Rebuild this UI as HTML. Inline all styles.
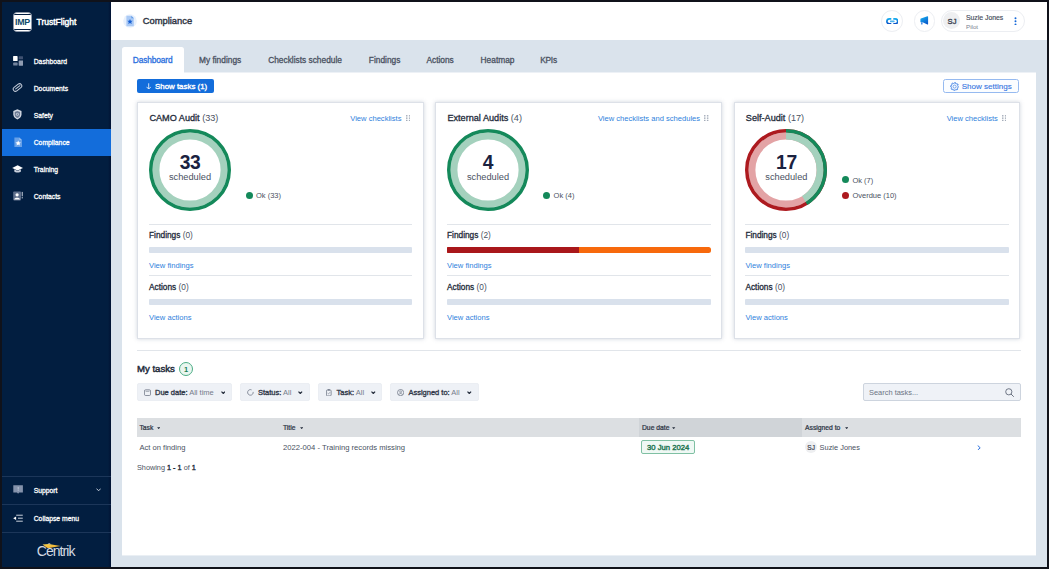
<!DOCTYPE html>
<html>
<head>
<meta charset="utf-8">
<title>Compliance</title>
<style>
*{box-sizing:border-box;margin:0;padding:0}
html,body{width:1049px;height:569px;overflow:hidden;background:#dae3ec}
body{font-family:"Liberation Sans",sans-serif;color:#2a3242;position:relative}
.a{position:absolute;white-space:nowrap;line-height:1}
</style>
</head>
<body>

<div class="a" style="left:0.00px;top:0.00px;width:111.00px;height:569.00px;background:#021e40"></div>
<div class="a" style="left:111.00px;top:0.00px;width:938.00px;height:40.00px;background:#fff"></div>
<div class="a" style="left:122.00px;top:73.00px;width:914.00px;height:482.00px;background:#fff"></div>
<div class="a" style="left:122.00px;top:72.00px;width:914.00px;height:1.00px;background:#edf1f6"></div>
<div class="a" style="left:122.00px;top:555.00px;width:914.00px;height:1.00px;background:#eaeff4"></div>
<div class="a" style="left:108.00px;top:0.00px;width:3.00px;height:569.00px;background:linear-gradient(to right,rgba(0,8,40,0),rgba(0,8,40,.55))"></div>
<div class="a" style="left:13px;top:12px;width:19px;height:20px;border-radius:4px;background:#fff;border:1px solid #8c97a8;overflow:hidden"><div class="a" style="left:0;top:0.8px;width:17px;height:1.3px;background:#021e40"></div><div class="a" style="left:0;bottom:0.8px;width:17px;height:1.3px;background:#021e40"></div><div class="a" style="left:1.0px;top:4.8px;font-size:8.8px;font-weight:bold;color:#0d4a6b;letter-spacing:-.3px">IMP</div></div>
<div class="a" style="font-size:8.5px;top:18.00px;color:#fff;left:36.50px;-webkit-text-stroke:0.45px #fff;">TrustFlight</div>
<div class="a" style="left:2.00px;top:129.00px;width:109.00px;height:27.00px;background:#136ddb"></div>
<div class="a" style="font-size:6.8px;top:59.00px;color:#fff;left:33.70px;-webkit-text-stroke:0.27px #fff;">Dashboard</div>
<div class="a" style="font-size:6.8px;top:86.00px;color:#fff;left:33.70px;-webkit-text-stroke:0.27px #fff;">Documents</div>
<div class="a" style="font-size:6.8px;top:113.00px;color:#fff;left:33.70px;-webkit-text-stroke:0.27px #fff;">Safety</div>
<div class="a" style="font-size:6.8px;top:140.00px;color:#fff;left:33.70px;-webkit-text-stroke:0.27px #fff;">Compliance</div>
<div class="a" style="font-size:6.8px;top:167.00px;color:#fff;left:33.70px;-webkit-text-stroke:0.27px #fff;">Training</div>
<div class="a" style="font-size:6.8px;top:194.00px;color:#fff;left:33.70px;-webkit-text-stroke:0.27px #fff;">Contacts</div>
<div class="a" style="font-size:6.8px;top:488.00px;color:#fff;left:33.70px;-webkit-text-stroke:0.27px #fff;">Support</div>
<div class="a" style="font-size:6.8px;top:516.00px;color:#fff;left:33.70px;-webkit-text-stroke:0.27px #fff;">Collapse menu</div>
<div class="a" style="left:2.00px;top:476.00px;width:109.00px;height:1.00px;background:#1c3659"></div>
<div class="a" style="left:2.00px;top:504.00px;width:109.00px;height:1.00px;background:#1c3659"></div>
<div class="a" style="left:2.00px;top:532.00px;width:109.00px;height:1.00px;background:#1c3659"></div>
<svg class="a" style="left:12.60px;top:55.60px" width="10.4" height="10.2" viewBox="0 0 10.4 10.2"><rect x="0.1" y="0.1" width="4.5" height="5" rx=".6" fill="#fff"/><rect x="5.7" y="0.3" width="4.4" height="3.0" rx=".6" fill="#3f5171"/><rect x="0.2" y="6.6" width="4.4" height="3.0" rx=".6" fill="#73839d"/><rect x="5.7" y="4.4" width="4.5" height="5.3" rx=".6" fill="#8f9cb2"/></svg>
<svg class="a" style="left:12.20px;top:82.20px" width="11" height="11" viewBox="0 0 11 11"><g transform="rotate(-38 5.5 5.5)" fill="none" stroke="#c3cbd8" stroke-linecap="round"><rect x="0.7" y="3.3" width="9.6" height="4.4" rx="2.2" stroke-width="1.05"/><path d="M3.2 5.5 H8.6" stroke-width="1.0"/></g></svg>
<svg class="a" style="left:13.30px;top:109.40px" width="8.8" height="10.8" viewBox="0 0 8.8 10.8"><path d="M4.4 0.3 L8.5 1.9 V5.3 C8.5 7.8 6.7 9.6 4.4 10.5 C2.1 9.6 0.3 7.8 0.3 5.3 V1.9 Z" fill="#d3d9e3"/><path d="M4.4 1.9 L7.1 3 V5.4 C7.1 7 5.9 8.3 4.4 9 C2.9 8.3 1.7 7 1.7 5.4 V3 Z" fill="#6c7b95"/><circle cx="4.4" cy="5.3" r="1.5" fill="#c3cbd8"/><circle cx="4.4" cy="5.3" r=".7" fill="#6c7b95"/></svg>
<svg class="a" style="left:13.60px;top:137.20px" width="8.4" height="10.4" viewBox="0 0 8.4 10.4"><path d="M0.4 0.4 H5.4 L8.0 3.0 V10 H0.4 Z" fill="rgba(255,255,255,.36)"/><path d="M5.4 0.4 V3.0 H8.0 Z" fill="rgba(255,255,255,.3)"/><path d="M4.2 3.5 L5.0 5.3 L6.9 5.45 L5.45 6.7 L5.9 8.6 L4.2 7.6 L2.5 8.6 L2.95 6.7 L1.5 5.45 L3.4 5.3 Z" fill="#fff"/></svg>
<svg class="a" style="left:12.40px;top:165.00px" width="11.2" height="8.4" viewBox="0 0 11.2 8.4"><path d="M5.6 0.2 L11 2.9 L5.6 5.6 L0.2 2.9 Z" fill="#fff"/><path d="M2.3 4.2 V6.4 C3.2 7.8 8.0 7.8 8.9 6.4 V4.2 L5.6 5.9 Z" fill="#c9d0dc"/></svg>
<svg class="a" style="left:13.00px;top:191.40px" width="10.6" height="10" viewBox="0 0 10.6 10"><rect x="0.2" y="0.4" width="7.8" height="9" rx=".8" fill="#60708c"/><circle cx="4.1" cy="3.8" r="1.6" fill="#fff"/><path d="M1.2 8.6 C1.2 6.2 7.0 6.2 7.0 8.6 Z" fill="#fff"/><rect x="8.7" y="0.9" width="1.1" height="4.4" fill="#b9c2d0"/><rect x="8.7" y="6.1" width="1.1" height="1.3" fill="#b9c2d0"/></svg>
<svg class="a" style="left:12.70px;top:484.80px" width="10.2" height="9" viewBox="0 0 10.2 9"><path d="M0.3 0.2 H9.9 V7.6 H6.2 L5.1 8.8 L4.0 7.6 H0.3 Z" fill="#8492ab"/><rect x="4.75" y="2.0" width=".8" height="2.6" fill="#c9d1de"/><rect x="4.75" y="5.2" width=".8" height=".8" fill="#c9d1de"/></svg>
<svg class="a" style="left:95.60px;top:487.80px" width="5.2" height="3.8" viewBox="0 0 5.2 3.8"><path d="M0.5 0.6 L2.6 2.8 L4.7 0.6" fill="none" stroke="#c3ccd9" stroke-width="1.0"/></svg>
<svg class="a" style="left:12.70px;top:513.60px" width="10.2" height="8" viewBox="0 0 10.2 8"><path d="M3.2 1.2 H9.8 M5.0 4.2 H9.8 M3.2 7.2 H9.8" stroke="#d5dae3" stroke-width=".95"/><path d="M3.1 2.4 L0.2 4.2 L3.1 6.0 Z" fill="#fff"/></svg>
<div class="a" style="font-size:14.0px;top:544.00px;color:#d3d9e2;left:36.70px;letter-spacing:-0.92px;">Centrik</div>
<svg class="a" style="left:42.20px;top:543.20px" width="19" height="6" viewBox="0 0 19 6"><defs><linearGradient id="lg3" x1="0" y1="0" x2="1" y2="1"><stop offset="0" stop-color="#f7d34f"/><stop offset="1" stop-color="#eea82a"/></linearGradient></defs><path d="M0.5 1.4 L6.6 0.9 L18.6 2.9 L5.8 5.3 Z" fill="url(#lg3)"/><path d="M5.6 0.9 L7.2 0.2 L9.4 1.3 Z" fill="#dfe3ea"/></svg>
<svg class="a" style="left:123.00px;top:14.00px" width="14" height="14" viewBox="0 0 14 14"><circle cx="7" cy="7" r="6.8" fill="#e9f1fc"/><path d="M3.4 1.8 H8.4 L10.8 4.2 V12.2 H3.4 Z" fill="#a9c9f5"/><path d="M8.4 1.8 V4.2 H10.8 Z" fill="#5f9be8"/><path d="M7 4.9 L7.8 6.7 L9.7 6.85 L8.25 8.1 L8.7 10 L7 9 L5.3 10 L5.75 8.1 L4.3 6.85 L6.2 6.7 Z" fill="#1760d3"/></svg>
<div class="a" style="font-size:9.4px;top:16.00px;color:#2f3645;left:142.70px;-webkit-text-stroke:0.4px #2f3645;">Compliance</div>
<div class="a" style="left:881.10px;top:9.90px;width:21.80px;height:21.80px;border-radius:50%;border:1px solid #eceef2;background:#fff"></div>
<svg class="a" style="left:885.60px;top:17.50px" width="12.6" height="6.8" viewBox="0 0 12.6 6.8"><defs><linearGradient id="lg1" x1="0" y1="0" x2="0" y2="1"><stop offset="0" stop-color="#14aaee"/><stop offset="1" stop-color="#0a4fc6"/></linearGradient></defs><path d="M5.3 0.9 H3.4 a2.5 2.5 0 0 0 0 5 H5.3 M7.3 0.9 H9.2 a2.5 2.5 0 0 1 0 5 H7.3" fill="none" stroke="url(#lg1)" stroke-width="1.7"/><rect x="4.0" y="2.6" width="4.6" height="1.6" rx=".4" fill="#4fb3ee"/></svg>
<div class="a" style="left:913.60px;top:9.90px;width:21.80px;height:21.80px;border-radius:50%;border:1px solid #eceef2;background:#fff"></div>
<svg class="a" style="left:920.40px;top:16.40px" width="8.6" height="9" viewBox="0 0 8.6 9"><defs><linearGradient id="lg2" x1="0.2" y1="0" x2="0.8" y2="1"><stop offset="0" stop-color="#16b0f0"/><stop offset="1" stop-color="#0a55c8"/></linearGradient></defs><path d="M0.4 3.2 Q0.4 2.7 0.9 2.6 L7.4 0.2 Q8.1 0.1 8.1 0.8 V8.0 Q8.1 8.7 7.4 8.5 L2.6 6.2 H0.9 Q0.4 6.2 0.4 5.7 Z" fill="url(#lg2)"/><path d="M1.0 6.2 H2.7 L2.5 8.4 H1.0 Z" fill="#4d8fe4"/></svg>
<div class="a" style="left:940.90px;top:9.90px;width:84.30px;height:21.80px;border-radius:11px;border:1px solid #eceef2;background:#fff"></div>
<div class="a" style="left:942.90px;top:12.20px;width:17.20px;height:17.20px;border-radius:50%;background:#eeeff1"></div>
<div class="a" style="font-size:7.6px;top:18.00px;color:#3a4150;left:947.60px;-webkit-text-stroke:0.35px #3a4150;letter-spacing:0.1px;">SJ</div>
<div class="a" style="font-size:6.85px;top:15.00px;color:#454c5a;left:966.00px;-webkit-text-stroke:0.15px #454c5a;">Suzie Jones</div>
<div class="a" style="font-size:6.2px;top:24.00px;color:#7a8290;left:966.00px;">Pilot</div>
<svg class="a" style="left:1014.40px;top:16.80px" width="3" height="8.6" viewBox="0 0 3 8.6"><circle cx="1.5" cy="1.2" r="1" fill="#1467d8"/><circle cx="1.5" cy="4.3" r="1" fill="#1467d8"/><circle cx="1.5" cy="7.4" r="1" fill="#1467d8"/></svg>
<div class="a" style="left:122.00px;top:47.00px;width:62.00px;height:26.00px;background:#fff;border-radius:2.5px 2.5px 0 0"></div>
<div class="a" style="font-size:8.35px;top:56.00px;color:#2a6fde;left:132.80px;-webkit-text-stroke:0.3px #2a6fde;letter-spacing:-0.12px;">Dashboard</div>
<div class="a" style="font-size:8.35px;top:56.00px;color:#4a5262;left:199.00px;-webkit-text-stroke:0.3px #4a5262;">My findings</div>
<div class="a" style="font-size:8.35px;top:56.00px;color:#4a5262;left:268.20px;-webkit-text-stroke:0.3px #4a5262;">Checklists schedule</div>
<div class="a" style="font-size:8.35px;top:56.00px;color:#4a5262;left:368.80px;-webkit-text-stroke:0.3px #4a5262;">Findings</div>
<div class="a" style="font-size:8.35px;top:56.00px;color:#4a5262;left:426.40px;-webkit-text-stroke:0.3px #4a5262;">Actions</div>
<div class="a" style="font-size:8.35px;top:56.00px;color:#4a5262;left:480.60px;-webkit-text-stroke:0.3px #4a5262;">Heatmap</div>
<div class="a" style="font-size:8.35px;top:56.00px;color:#4a5262;left:540.20px;-webkit-text-stroke:0.3px #4a5262;letter-spacing:-0.25px;">KPIs</div>
<div class="a" style="left:137.00px;top:79.00px;width:77.00px;height:14.00px;background:#136ddb;border-radius:2px"></div>
<svg class="a" style="left:145.60px;top:82.60px" width="5.4" height="6.8" viewBox="0 0 5.4 6.8"><path d="M2.7 0.3 V6.0 M0.5 3.8 L2.7 6.1 L4.9 3.8" fill="none" stroke="#fff" stroke-width=".8"/></svg>
<div class="a" style="font-size:7.9px;top:83.00px;color:#fff;left:155.00px;-webkit-text-stroke:0.35px #fff;">Show tasks (1)</div>
<div class="a" style="left:943.40px;top:79.30px;width:75.60px;height:14.20px;border:1px solid #96baf0;border-radius:2.5px;background:#fbfdff"></div>
<svg class="a" style="left:950.20px;top:81.50px" width="9.2" height="9.2" viewBox="0 0 9.2 9.2"><circle cx="4.6" cy="4.6" r="3.5" fill="none" stroke="#4d8ae6" stroke-width=".8"/><circle cx="4.6" cy="4.6" r="4.15" fill="none" stroke="#4d8ae6" stroke-width=".9" stroke-dasharray="1.63 1.63" stroke-dashoffset=".8"/><circle cx="4.6" cy="4.6" r="1.55" fill="none" stroke="#4d8ae6" stroke-width=".75"/></svg>
<div class="a" style="font-size:8.05px;top:83.00px;color:#3373e1;left:961.70px;-webkit-text-stroke:0.1px #3373e1;">Show settings</div>
<div class="a" style="left:137.40px;top:102.30px;width:286.40px;height:236.30px;background:#fff;border:1px solid #dde1e8;box-shadow:0 0 4px rgba(130,142,165,.38)"></div>
<div class="a" style="left:149.40px;top:114px;font-size:9.15px;color:#4a5262"><span style="color:#232b3a;-webkit-text-stroke:.3px #232b3a">CAMO Audit</span> (33)</div>
<div class="a" style="font-size:7.58px;top:115.00px;color:#2f7fdc;right:647.50px;">View checklists</div>
<svg class="a" style="left:405.60px;top:115.10px" width="4.4" height="6.3" viewBox="0 0 4.4 6.3"><g fill="#a4acb9"><rect x="0" y="0.1" width="1.5" height="1.4"/><rect x="2.9" y="0.1" width="1.5" height="1.4"/><rect x="0" y="2.45" width="1.5" height="1.4"/><rect x="2.9" y="2.45" width="1.5" height="1.4"/><rect x="0" y="4.8" width="1.5" height="1.4"/><rect x="2.9" y="4.8" width="1.5" height="1.4"/></g></svg>
<svg class="a" style="left:149.00px;top:128.80px" width="82" height="82" viewBox="0 0 82 82"><circle cx="41" cy="41" r="34.1" fill="none" stroke="#a4d1bd" stroke-width="7.0"/><circle cx="41" cy="41" r="39.25" fill="none" stroke="#14895a" stroke-width="3.5"/></svg>
<div class="a" style="left:149.00px;width:82px;text-align:center;top:153px;font-size:19.3px;letter-spacing:-.45px;font-weight:bold;color:#1a2240">33</div>
<div class="a" style="left:149.00px;width:82px;text-align:center;top:173px;font-size:9.25px;color:#4a5262">scheduled</div>
<div class="a" style="left:245.60px;top:191.50px;width:7.00px;height:7.00px;border-radius:50%;background:#14895a"></div>
<div class="a" style="font-size:7.5px;top:192.00px;color:#4a5262;left:256.00px;">Ok (33)</div>
<div class="a" style="left:149.00px;top:223.60px;width:263.30px;height:1.00px;background:#e1e5ea"></div>
<div class="a" style="left:149.00px;top:231px;font-size:8.3px;color:#4a5262"><span style="color:#232b3a;-webkit-text-stroke:.3px #232b3a">Findings</span> (0)</div>
<div class="a" style="left:149.00px;top:247.00px;width:263.30px;height:6.20px;background:#d9e1ec;border-radius:1px"></div>
<div class="a" style="font-size:7.6px;top:262.00px;color:#2f7fdc;left:149.00px;">View findings</div>
<div class="a" style="left:149.00px;top:275.00px;width:263.30px;height:1.00px;background:#e1e5ea"></div>
<div class="a" style="left:149.00px;top:283px;font-size:8.3px;color:#4a5262"><span style="color:#232b3a;-webkit-text-stroke:.3px #232b3a">Actions</span> (0)</div>
<div class="a" style="left:149.00px;top:298.70px;width:263.30px;height:6.20px;background:#d9e1ec;border-radius:1px"></div>
<div class="a" style="font-size:7.6px;top:314.00px;color:#2f7fdc;left:149.00px;">View actions</div>
<div class="a" style="left:435.00px;top:102.30px;width:287.40px;height:236.30px;background:#fff;border:1px solid #dde1e8;box-shadow:0 0 4px rgba(130,142,165,.38)"></div>
<div class="a" style="left:447.40px;top:114px;font-size:9.15px;color:#4a5262"><span style="color:#232b3a;-webkit-text-stroke:.3px #232b3a">External Audits</span> (4)</div>
<div class="a" style="font-size:7.58px;top:115.00px;color:#2f7fdc;right:348.90px;">View checklists and schedules</div>
<svg class="a" style="left:704.20px;top:115.10px" width="4.4" height="6.3" viewBox="0 0 4.4 6.3"><g fill="#a4acb9"><rect x="0" y="0.1" width="1.5" height="1.4"/><rect x="2.9" y="0.1" width="1.5" height="1.4"/><rect x="0" y="2.45" width="1.5" height="1.4"/><rect x="2.9" y="2.45" width="1.5" height="1.4"/><rect x="0" y="4.8" width="1.5" height="1.4"/><rect x="2.9" y="4.8" width="1.5" height="1.4"/></g></svg>
<svg class="a" style="left:447.00px;top:128.80px" width="82" height="82" viewBox="0 0 82 82"><circle cx="41" cy="41" r="34.1" fill="none" stroke="#a4d1bd" stroke-width="7.0"/><circle cx="41" cy="41" r="39.25" fill="none" stroke="#14895a" stroke-width="3.5"/></svg>
<div class="a" style="left:447.00px;width:82px;text-align:center;top:153px;font-size:19.3px;letter-spacing:-.45px;font-weight:bold;color:#1a2240">4</div>
<div class="a" style="left:447.00px;width:82px;text-align:center;top:173px;font-size:9.25px;color:#4a5262">scheduled</div>
<div class="a" style="left:543.20px;top:191.50px;width:7.00px;height:7.00px;border-radius:50%;background:#14895a"></div>
<div class="a" style="font-size:7.5px;top:192.00px;color:#4a5262;left:553.60px;">Ok (4)</div>
<div class="a" style="left:447.00px;top:223.60px;width:263.90px;height:1.00px;background:#e1e5ea"></div>
<div class="a" style="left:447.00px;top:231px;font-size:8.3px;color:#4a5262"><span style="color:#232b3a;-webkit-text-stroke:.3px #232b3a">Findings</span> (2)</div>
<div class="a" style="left:447.00px;top:247px;width:264.30px;height:6.2px;border-radius:1px 2.5px 2.5px 1px;background:#f7690c;overflow:hidden"><div style="width:50%;height:7px;background:#a9171b"></div></div>
<div class="a" style="font-size:7.6px;top:262.00px;color:#2f7fdc;left:447.00px;">View findings</div>
<div class="a" style="left:447.00px;top:275.00px;width:263.90px;height:1.00px;background:#e1e5ea"></div>
<div class="a" style="left:447.00px;top:283px;font-size:8.3px;color:#4a5262"><span style="color:#232b3a;-webkit-text-stroke:.3px #232b3a">Actions</span> (0)</div>
<div class="a" style="left:447.00px;top:298.70px;width:263.90px;height:6.20px;background:#d9e1ec;border-radius:1px"></div>
<div class="a" style="font-size:7.6px;top:314.00px;color:#2f7fdc;left:447.00px;">View actions</div>
<div class="a" style="left:733.80px;top:102.30px;width:286.40px;height:236.30px;background:#fff;border:1px solid #dde1e8;box-shadow:0 0 4px rgba(130,142,165,.38)"></div>
<div class="a" style="left:745.80px;top:114px;font-size:9.15px;color:#4a5262"><span style="color:#232b3a;-webkit-text-stroke:.3px #232b3a">Self-Audit</span> (17)</div>
<div class="a" style="font-size:7.58px;top:115.00px;color:#2f7fdc;right:51.10px;">View checklists</div>
<svg class="a" style="left:1002.00px;top:115.10px" width="4.4" height="6.3" viewBox="0 0 4.4 6.3"><g fill="#a4acb9"><rect x="0" y="0.1" width="1.5" height="1.4"/><rect x="2.9" y="0.1" width="1.5" height="1.4"/><rect x="0" y="2.45" width="1.5" height="1.4"/><rect x="2.9" y="2.45" width="1.5" height="1.4"/><rect x="0" y="4.8" width="1.5" height="1.4"/><rect x="2.9" y="4.8" width="1.5" height="1.4"/></g></svg>
<svg class="a" style="left:745.40px;top:128.80px" width="82" height="82" viewBox="0 0 82 82"><g transform="rotate(-90 41 41)"><circle cx="41" cy="41" r="34.1" fill="none" stroke="#e3a3a5" stroke-width="7.0"/><circle cx="41" cy="41" r="39.25" fill="none" stroke="#ad1a1f" stroke-width="3.5"/><circle cx="41" cy="41" r="34.1" fill="none" stroke="#a4d1bd" stroke-width="7.0" stroke-dasharray="88.22 214.26"/><circle cx="41" cy="41" r="39.25" fill="none" stroke="#14895a" stroke-width="3.5" stroke-dasharray="101.55 246.62"/></g></svg>
<div class="a" style="left:745.40px;width:82px;text-align:center;top:153px;font-size:19.3px;letter-spacing:-.45px;font-weight:bold;color:#1a2240">17</div>
<div class="a" style="left:745.40px;width:82px;text-align:center;top:173px;font-size:9.25px;color:#4a5262">scheduled</div>
<div class="a" style="left:842.00px;top:176.30px;width:7.00px;height:7.00px;border-radius:50%;background:#14895a"></div>
<div class="a" style="font-size:7.5px;top:177.00px;color:#4a5262;left:852.40px;">Ok (7)</div>
<div class="a" style="left:842.00px;top:191.50px;width:7.00px;height:7.00px;border-radius:50%;background:#ad1a1f"></div>
<div class="a" style="font-size:7.5px;top:192.00px;color:#4a5262;left:852.40px;">Overdue (10)</div>
<div class="a" style="left:745.40px;top:223.60px;width:263.30px;height:1.00px;background:#e1e5ea"></div>
<div class="a" style="left:745.40px;top:231px;font-size:8.3px;color:#4a5262"><span style="color:#232b3a;-webkit-text-stroke:.3px #232b3a">Findings</span> (0)</div>
<div class="a" style="left:745.40px;top:247.00px;width:263.30px;height:6.20px;background:#d9e1ec;border-radius:1px"></div>
<div class="a" style="font-size:7.6px;top:262.00px;color:#2f7fdc;left:745.40px;">View findings</div>
<div class="a" style="left:745.40px;top:275.00px;width:263.30px;height:1.00px;background:#e1e5ea"></div>
<div class="a" style="left:745.40px;top:283px;font-size:8.3px;color:#4a5262"><span style="color:#232b3a;-webkit-text-stroke:.3px #232b3a">Actions</span> (0)</div>
<div class="a" style="left:745.40px;top:298.70px;width:263.30px;height:6.20px;background:#d9e1ec;border-radius:1px"></div>
<div class="a" style="font-size:7.6px;top:314.00px;color:#2f7fdc;left:745.40px;">View actions</div>
<div class="a" style="left:137.00px;top:349.80px;width:884.00px;height:1.00px;background:#e1e5ea"></div>
<div class="a" style="font-size:9.6px;top:364.00px;color:#232b3a;left:137.00px;-webkit-text-stroke:0.45px #232b3a;">My tasks</div>
<div class="a" style="left:179.00px;top:362.00px;width:14.00px;height:14.00px;border-radius:50%;border:1.2px solid #4bad85;background:#eaf6f0"></div>
<div class="a" style="font-size:7.5px;top:366.00px;color:#1c7d55;left:183.90px;font-weight:bold;">1</div>
<div class="a" style="left:137.00px;top:383.00px;width:95.00px;height:17.60px;background:#eef1f6;border:1px solid #ebeef3;border-radius:2px"></div>
<svg class="a" style="left:144.00px;top:389.00px" width="7" height="7" viewBox="0 0 7 7"><rect x=".45" y=".8" width="6.1" height="5.7" rx="1.2" fill="none" stroke="#6a7282" stroke-width=".75"/><path d="M1.6 2.3 H5.4" stroke="#6a7282" stroke-width=".6"/></svg>
<div class="a" style="left:155.00px;top:389px;font-size:7.5px;color:#747c8b"><span style="color:#303848;-webkit-text-stroke:.33px #303848">Due date:</span> All time</div>
<svg class="a" style="left:220.60px;top:390.90px" width="4.6" height="3.4" viewBox="0 0 4.6 3.4"><path d="M0.5 0.6 L2.3 2.5 L4.1 0.6" fill="none" stroke="#232b3a" stroke-width="1.2"/></svg>
<div class="a" style="left:240.00px;top:383.00px;width:70.00px;height:17.60px;background:#eef1f6;border:1px solid #ebeef3;border-radius:2px"></div>
<svg class="a" style="left:247.00px;top:389.20px" width="6.8" height="6.8" viewBox="0 0 6.8 6.8"><path d="M6.16 2.91 A2.8 2.8 0 1 1 4.58 0.86" fill="none" stroke="#6a7282" stroke-width=".75"/></svg>
<div class="a" style="left:258.00px;top:389px;font-size:7.5px;color:#747c8b"><span style="color:#303848;-webkit-text-stroke:.33px #303848">Status:</span> All</div>
<svg class="a" style="left:298.20px;top:390.90px" width="4.6" height="3.4" viewBox="0 0 4.6 3.4"><path d="M0.5 0.6 L2.3 2.5 L4.1 0.6" fill="none" stroke="#232b3a" stroke-width="1.2"/></svg>
<div class="a" style="left:318.00px;top:383.00px;width:64.40px;height:17.60px;background:#eef1f6;border:1px solid #ebeef3;border-radius:2px"></div>
<svg class="a" style="left:326.00px;top:388.80px" width="5.6" height="7.4" viewBox="0 0 5.6 7.4"><rect x=".45" y="1" width="4.7" height="5.9" rx=".9" fill="none" stroke="#6a7282" stroke-width=".75"/><rect x="1.7" y=".2" width="2.2" height="1.3" rx=".3" fill="#6a7282"/><path d="M1.6 4.2 L2.5 5.0 L4.0 3.2" fill="none" stroke="#6a7282" stroke-width=".6"/></svg>
<div class="a" style="left:336.60px;top:389px;font-size:7.5px;color:#747c8b"><span style="color:#303848;-webkit-text-stroke:.33px #303848">Task:</span> All</div>
<svg class="a" style="left:371.00px;top:390.90px" width="4.6" height="3.4" viewBox="0 0 4.6 3.4"><path d="M0.5 0.6 L2.3 2.5 L4.1 0.6" fill="none" stroke="#232b3a" stroke-width="1.2"/></svg>
<div class="a" style="left:390.20px;top:383.00px;width:88.40px;height:17.60px;background:#eef1f6;border:1px solid #ebeef3;border-radius:2px"></div>
<svg class="a" style="left:397.20px;top:388.90px" width="7.2" height="7.2" viewBox="0 0 7.2 7.2"><circle cx="3.6" cy="3.6" r="3.1" fill="none" stroke="#6a7282" stroke-width=".75"/><circle cx="3.6" cy="2.9" r=".95" fill="none" stroke="#6a7282" stroke-width=".6"/><path d="M1.7 5.6 C2.2 4.2 5.0 4.2 5.5 5.6" fill="none" stroke="#6a7282" stroke-width=".6"/></svg>
<div class="a" style="left:408.40px;top:389px;font-size:7.5px;color:#747c8b"><span style="color:#303848;-webkit-text-stroke:.33px #303848">Assigned to:</span> All</div>
<svg class="a" style="left:467.00px;top:390.90px" width="4.6" height="3.4" viewBox="0 0 4.6 3.4"><path d="M0.5 0.6 L2.3 2.5 L4.1 0.6" fill="none" stroke="#232b3a" stroke-width="1.2"/></svg>
<div class="a" style="left:863.00px;top:383.00px;width:157.60px;height:17.60px;background:#eff2f7;border:1px solid #cdd4de;border-radius:2px"></div>
<div class="a" style="font-size:7.44px;top:389.00px;color:#6d7584;left:869.00px;">Search tasks...</div>
<svg class="a" style="left:1005.00px;top:387.60px" width="9.2" height="9.2" viewBox="0 0 9.2 9.2"><circle cx="3.8" cy="3.8" r="3.1" fill="none" stroke="#5a6272" stroke-width=".85"/><path d="M6.0 6.0 L8.8 8.8" stroke="#5a6272" stroke-width=".9"/></svg>
<div class="a" style="left:137.00px;top:418.00px;width:883.60px;height:19.20px;background:#dcdfe2"></div>
<div class="a" style="left:639.00px;top:418.00px;width:163.40px;height:19.20px;background:#d0d4d8"></div>
<div class="a" style="font-size:6.75px;top:425.00px;color:#2b3343;left:139.40px;-webkit-text-stroke:0.22px #2b3343;">Task</div>
<svg class="a" style="left:157.00px;top:427.00px" width="3.4" height="2.4" viewBox="0 0 3.4 2.4"><path d="M0.1 0.2 H3.3 L1.7 2.2 Z" fill="#232b3a"/></svg>
<div class="a" style="font-size:6.75px;top:425.00px;color:#2b3343;left:283.00px;-webkit-text-stroke:0.22px #2b3343;">Title</div>
<svg class="a" style="left:300.00px;top:427.00px" width="3.4" height="2.4" viewBox="0 0 3.4 2.4"><path d="M0.1 0.2 H3.3 L1.7 2.2 Z" fill="#232b3a"/></svg>
<div class="a" style="font-size:6.75px;top:425.00px;color:#2b3343;left:642.00px;-webkit-text-stroke:0.22px #2b3343;">Due date</div>
<svg class="a" style="left:672.40px;top:427.00px" width="3.4" height="2.4" viewBox="0 0 3.4 2.4"><path d="M0.1 0.2 H3.3 L1.7 2.2 Z" fill="#232b3a"/></svg>
<div class="a" style="font-size:6.75px;top:425.00px;color:#2b3343;left:805.00px;-webkit-text-stroke:0.22px #2b3343;">Assigned to</div>
<svg class="a" style="left:844.60px;top:427.00px" width="3.4" height="2.4" viewBox="0 0 3.4 2.4"><path d="M0.1 0.2 H3.3 L1.7 2.2 Z" fill="#232b3a"/></svg>
<div class="a" style="font-size:7.6px;top:444.00px;color:#4a5262;left:139.40px;">Act on finding</div>
<div class="a" style="font-size:7.67px;top:444.00px;color:#4a5262;left:283.00px;">2022-004 - Training records missing</div>
<div class="a" style="left:641.40px;top:440.00px;width:53.20px;height:14.40px;border:1px solid #7fc0a3;border-radius:2px;background:#eff8f4"></div>
<div class="a" style="font-size:7.7px;top:444.00px;color:#247652;left:647.00px;-webkit-text-stroke:0.4px #247652;">30 Jun 2024</div>
<div class="a" style="left:805.00px;top:441.00px;width:12.00px;height:12.00px;border-radius:50%;background:#eeeff1"></div>
<div class="a" style="font-size:6.5px;top:445.00px;color:#3a4150;left:807.30px;-webkit-text-stroke:0.2px #3a4150;">SJ</div>
<div class="a" style="font-size:7.42px;top:444.00px;color:#4a5262;left:819.60px;">Suzie Jones</div>
<svg class="a" style="left:976.60px;top:444.80px" width="4.2" height="5.6" viewBox="0 0 4.2 5.6"><path d="M0.7 0.5 L3.2 2.8 L0.7 5.1" fill="none" stroke="#2a6fde" stroke-width="1"/></svg>
<div class="a" style="left:137px;top:464px;font-size:7.3px;color:#4a5262">Showing <span style="color:#232b3a;-webkit-text-stroke:.35px #232b3a">1 - 1</span> of <span style="color:#232b3a;-webkit-text-stroke:.35px #232b3a">1</span></div>
<div class="a" style="left:0.00px;top:0.00px;width:1049.00px;height:2.00px;background:#10121a"></div>
<div class="a" style="left:0.00px;top:0.00px;width:2.00px;height:569.00px;background:#10121a"></div>
<div class="a" style="left:1047.00px;top:0.00px;width:2.00px;height:569.00px;background:#10121a"></div>
<div class="a" style="left:0.00px;top:566.60px;width:1049.00px;height:2.40px;background:#10121a"></div>
</body>
</html>
